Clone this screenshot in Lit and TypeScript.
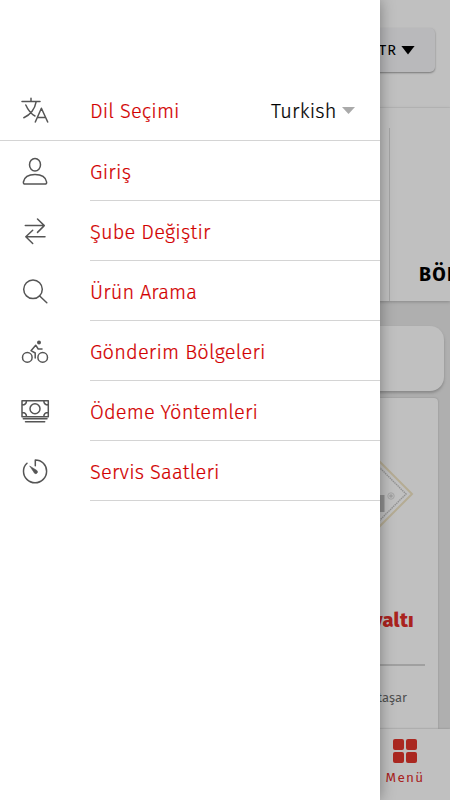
import { LitElement, html, svg, css } from "lit";
import { customElement } from "lit/decorators.js";

const icons: Record<string, unknown> = {
  language: svg`<path d="M4 5.5H22M13 2.3V5.5M7.8 9C10.5 15 13.5 18.2 17 20M18.2 5.7C16.8 13 12 19 5.8 21.8M17.3 26L23.4 12.2L29.7 26M19.4 21.5H27.4"/>`,
  person: svg`<ellipse cx="17" cy="8.8" rx="5.5" ry="6.3"/><path d="M7 28H27C28.2 28 28.8 27.2 28.6 26C27.7 21.2 23 18.6 17 18.6S6.3 21.2 5.4 26C5.2 27.2 5.8 28 7 28Z"/>`,
  swap: svg`<path d="M7.3 9.6H26.3M19.5 3L26.3 9.6L19.5 16.4M27 20.8H8M14.7 14.2L7.8 20.8L14.7 27.5"/>`,
  search: svg`<circle cx="15" cy="13.3" r="9.3"/><path d="M21.7 20L28.8 26.7"/>`,
  bicycle: svg`<circle cx="9.3" cy="21.4" r="4.8"/><circle cx="24.7" cy="21.4" r="4.8"/><circle cx="21" cy="6.4" r="2" fill="#555" stroke="none"/><path d="M17.2 22V17L13 14.7L17.7 9.2L20.2 13H24"/>`,
  cash: svg`<path d="M4 4.8H30.3V20.7H4ZM8.5 4.8Q8.5 9 4 9M25.8 4.8Q25.8 9 30.3 9M4 16.5Q8.5 16.5 8.5 20.7M30.3 16.5Q25.8 16.5 25.8 20.7M5.3 22.8H29M7.5 25.7H26.7"/><circle cx="17" cy="12.7" r="5"/>`,
  timer: svg`<path d="M17.3 9.8V4C23.8 4 28.6 9 28.6 15.2A11.5 11.5 0 0 1 5.5 15.2C5.5 12 6.7 9.4 9 7.3"/><path d="M12 10.2L18.5 14.3A1.8 1.8 0 1 1 16 16.5Z" fill="#555" stroke-width=".6"/>`,
};

const items = [
  { icon: "person", label: "Giriş", width: 41 },
  { icon: "swap", label: "Şube Değiştir", width: 120.5 },
  { icon: "search", label: "Ürün Arama", width: 107 },
  { icon: "bicycle", label: "Gönderim Bölgeleri", width: 175.5 },
  { icon: "cash", label: "Ödeme Yöntemleri", width: 168 },
  { icon: "timer", label: "Servis Saatleri", width: 129.5 },
];

@customElement("app-root")
export class AppRoot extends LitElement {
  static styles = css`
    :host { display: block; position: relative; width: 450px; height: 800px; overflow: hidden; background: #afafaf; font-family: "Fira Sans", "Noto Sans", sans-serif; }
    * { box-sizing: border-box; }
    .page { display: flex; flex-direction: column; height: 800px; }
    .top { height: 108px; flex: none; display: flex; justify-content: flex-end; padding: 28px 15px 0; background: #c0c0c0; border-bottom: 1px solid #bababa; }
    .lang { display: flex; align-items: center; justify-content: flex-end; gap: 4px; width: 100px; height: 44px; padding-right: 20px; border-radius: 5px; background: #b9b9bb; box-shadow: 0 1px 2px #777; font-size: 14.5px; letter-spacing: 1px; }
    .tri { width: 14px; height: 9px; background: #000; clip-path: polygon(0 0, 100% 0, 50% 100%); }
    .cats { height: 193px; flex: none; display: flex; justify-content: flex-end; padding-top: 20px; background: #c0c0c0; box-shadow: 0 1px 3px #888; }
    .cat { width: 61px; border-left: 1px solid #a5a5a5; padding: 135px 0 0 29px; font-size: 19.5px; line-height: 24px; font-weight: 700; letter-spacing: 1.3px; white-space: nowrap; overflow: hidden; height: 173px; }
    .notice { height: 65px; flex: none; margin: 25px 6px 7px 0; border-radius: 0 14px 14px 0; background: #c0c0c0; box-shadow: 0 2px 3px #888; }
    .product { height: 331px; flex: none; margin-right: 12px; border-radius: 0 4px 0 0; background: #c0c0c0; box-shadow: 0 0 2px #888; display: flex; flex-direction: column; align-items: flex-end; }
    .logo { width: 58px; height: 80px; margin-top: 57px; flex: none; }
    .title { margin: 69px 24px 0 0; font-size: 20px; line-height: 32px; font-weight: 800; letter-spacing: .3px; color: #aa231e; }
    .rule { width: 100px; height: 2px; margin: 28px 13px 0 0; background: #a0a0a0; }
    .note { margin: 22px 31px 0 0; font-size: 13px; line-height: 20px; color: #505050; }
    .nav { height: 71px; flex: none; display: flex; justify-content: flex-end; background: #c0c0c0; box-shadow: 0 0 2px #888; position: relative; }
    .tab { width: 90px; display: flex; flex-direction: column; align-items: center; padding-top: 10px; color: #a8231e; font-size: 13.5px; line-height: 18px; letter-spacing: 1.3px; }
    .grid { width: 24px; height: 24px; display: grid; grid-template-columns: 11px 11px; grid-template-rows: 11px 11px; gap: 2px; margin-bottom: 6px; }
    .grid i { background: #aa2821; border-radius: 2px; }
    .drawer { position: absolute; inset: 0 auto 0 0; width: 380px; padding-top: 81px; background: #fff; box-shadow: 0 0 14px rgba(0,0,0,.36); }
    .row { display: flex; height: 60px; align-items: stretch; }
    .icon { width: 34px; height: 34px; flex: none; margin: 15px 38px 0 18px; fill: none; stroke: #555; stroke-width: 1.5; stroke-linecap: round; stroke-linejoin: round; }
    .body { flex: 1; display: flex; align-items: center; border-bottom: 1px solid #d4d4d4; padding-top: 3px; }
    .row.first { border-bottom: 1px solid #d4d4d4; }
    .first .body { border: 0; padding: 0 25px 0 0; }
    .label { display: block; height: 30px; overflow: visible; font-size: 20px; font-weight: 300; fill: #d20000; stroke: #d20000; stroke-width: .2; }
    .value { fill: #000; stroke: #000; margin-left: auto; }
    .caret { width: 13px; height: 7px; margin-left: 6px; background: #aaa; clip-path: polygon(0 0, 100% 0, 50% 100%); }
  `;

  icon(name: string) {
    return html`<svg class="icon" viewBox="0 0 34 34">${icons[name]}</svg>`;
  }

  label(text: string, width: number, extra = "") {
    return html`<svg class="label ${extra}" width=${width} height="30"><text x="0" y="22" textLength=${width} lengthAdjust="spacing">${text}</text></svg>`;
  }

  render() {
    return html`
      <div class="page">
        <header class="top"><div class="lang">TR<span class="tri"></span></div></header>
        <section class="cats"><div class="cat">BÖREK</div></section>
        <section class="notice"></section>
        <section class="product">
          <svg class="logo" viewBox="380 455 58 80" fill="none">
            <path d="M368 450L412 494L368 538" stroke="#b5ac94" stroke-width="2"/>
            <path d="M368 456L406 494L368 532" stroke="#929292" stroke-width="1.4" stroke-dasharray="1.5 .7"/>
            <path d="M380 495H384.5V512H380Z" fill="#909090"/>
            <circle cx="391" cy="496" r="3.2" stroke="#a5a5a5"/><circle cx="391" cy="496" r="1.8" fill="#a0a0a0"/>
          </svg>
          <div class="title">Kahvaltı</div>
          <div class="rule"></div>
          <div class="note">taşar</div>
        </section>
        <nav class="nav"><div class="tab"><div class="grid"><i></i><i></i><i></i><i></i></div>Menü</div></nav>
      </div>
      <aside class="drawer">
        <div class="row first">
          ${this.icon("language")}
          <div class="body">${this.label("Dil Seçimi", 89.5)}${this.label("Turkish", 65.5, "value")}<span class="caret"></span></div>
        </div>
        ${items.map((item) => html`<div class="row">${this.icon(item.icon)}<div class="body">${this.label(item.label, item.width)}</div></div>`)}
      </aside>
    `;
  }
}
